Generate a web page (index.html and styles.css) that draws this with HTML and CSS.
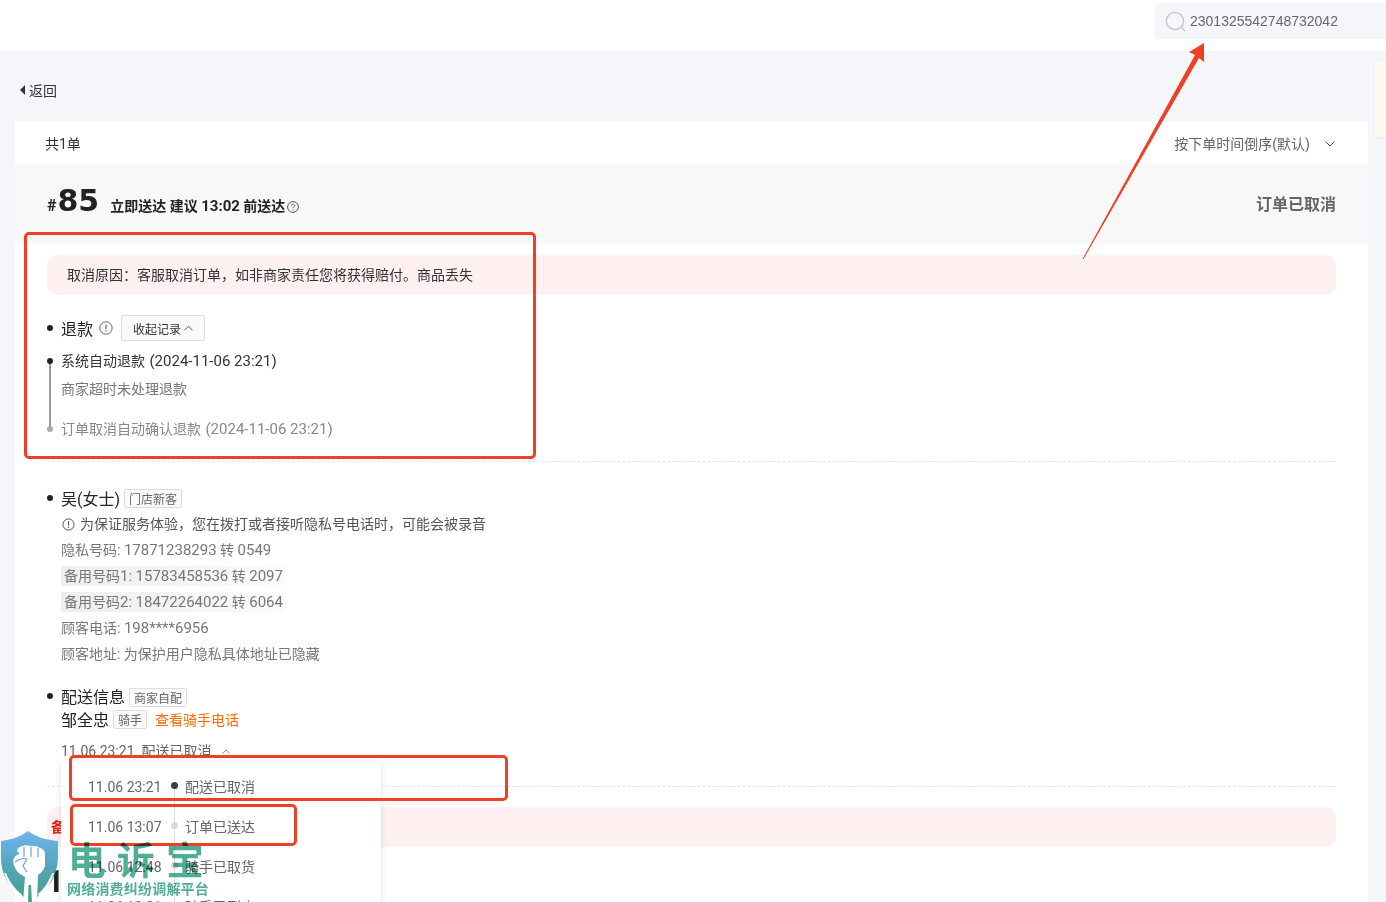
FILE: index.html
```html
<!DOCTYPE html>
<html lang="zh-CN">
<head>
<meta charset="utf-8">
<title>订单详情</title>
<link rel="stylesheet" href="styles.css">
</head>
<body>
<div class="page">
  <header class="topbar">
    <div class="search">
      <svg class="search-icon" viewBox="0 0 22 22" width="22" height="22"><circle cx="10" cy="10" r="8.6" fill="none" stroke="#c8c8d4" stroke-width="1.5"/><path d="M16.5 16.5 L20 20" stroke="#c8c8d4" stroke-width="1.5" fill="none"/></svg>
      <span class="search-text">2301325542748732042</span>
    </div>
  </header>
  <div class="content">
    <main class="main">
      <div class="back"><span class="back-arrow"></span>返回</div>
      <div class="list-head">
        <span>共1单</span>
        <span class="sort">按下单时间倒序(默认)<svg class="sort-icon" viewBox="0 0 10 6" width="10" height="6"><path d="M0.5 0.5 L5 5 L9.5 0.5" fill="none" stroke="#555" stroke-width="1"/></svg></span>
      </div>
      <div class="order-head">
        <div class="order-id">
          <span class="hash">#</span><span class="num">85</span>
          <span class="eta">立即送达 建议 <span class="wide">13:02</span> 前送达</span>
          <svg class="help" viewBox="0 0 12 12" width="12" height="12"><circle cx="6" cy="6" r="5.4" fill="none" stroke="#444" stroke-width="0.9"/><path d="M4.4 4.8 C4.4 2.8 7.6 2.8 7.6 4.7 C7.6 5.9 6 5.9 6 7.3" fill="none" stroke="#444" stroke-width="0.9"/><circle cx="6" cy="9" r="0.6" fill="#444"/></svg>
        </div>
        <div class="order-status">订单已取消</div>
      </div>
      <section class="card">
        <div class="banner">取消原因：客服取消订单，如非商家责任您将获得赔付。商品丢失</div>
        <div class="refund-block">
          <div class="title-row">
            <span class="bullet"></span><span class="title">退款</span>
            <svg class="info" viewBox="0 0 14 14" width="14" height="14"><circle cx="7" cy="7" r="6.2" fill="none" stroke="#666" stroke-width="1"/><path d="M7 3.4 V8" stroke="#666" stroke-width="1.2"/><circle cx="7" cy="10" r="0.75" fill="#666"/></svg>
            <span class="record-btn">收起记录<svg viewBox="0 0 10 6" width="9" height="6"><path d="M0.5 5.5 L5 1 L9.5 5.5" fill="none" stroke="#444" stroke-width="1"/></svg></span>
          </div>
          <div class="refund-line">
            <div class="tl tl-first"><span class="tl-dot"></span><span class="tl-main">系统自动退款 <span class="wide tl-date">(2024-11-06 23:21)</span></span></div>
            <div class="tl tl-note">商家超时未处理退款</div>
            <div class="tl tl-last"><span class="tl-dot tl-dot-grey"></span><span class="tl-grey">订单取消自动确认退款 <span class="wide tl-date">(2024-11-06 23:21)</span></span></div>
          </div>
        </div>
        <div class="dash dash-a"></div>
        <div class="customer">
          <div class="title-row">
            <span class="bullet"></span><span class="title">吴(女士)</span><span class="tag">门店新客</span>
          </div>
          <div class="info-lines">
            <div class="line line-tip"><svg viewBox="0 0 14 14" width="13" height="13"><circle cx="7" cy="7" r="6" fill="none" stroke="#445" stroke-width="1"/><path d="M7 3.6 V8" stroke="#445" stroke-width="1.2"/><circle cx="7" cy="10" r="0.75" fill="#445"/></svg>为保证服务体验，您在拨打或者接听隐私号电话时，可能会被录音</div>
            <div class="line">隐私号码: <span class="wide">17871238293</span> 转 <span class="wide">0549</span></div>
            <div class="line"><span class="backup">备用号码<span class="wide">1:</span> <span class="wide">15783458536</span> 转 <span class="wide">2097</span></span></div>
            <div class="line"><span class="backup">备用号码<span class="wide">2:</span> <span class="wide">18472264022</span> 转 <span class="wide">6064</span></span></div>
            <div class="line">顾客电话: <span class="wide">198****6956</span></div>
            <div class="line">顾客地址: 为保护用户隐私具体地址已隐藏</div>
          </div>
        </div>
        <div class="delivery">
          <div class="title-row delivery-title">
            <span class="bullet"></span><span class="title">配送信息</span><span class="tag tag-low">商家自配</span>
          </div>
          <div class="rider"><span class="title">邹全忠</span><span class="tag tag-rider">骑手</span><span class="rider-link">查看骑手电话</span></div>
          <div class="status-line">11.06 23:21&nbsp;&nbsp;配送已取消<svg viewBox="0 0 10 6" width="8" height="5"><path d="M0.5 5.5 L5 1 L9.5 5.5" fill="none" stroke="#666" stroke-width="1"/></svg></div>
        </div>
        <div class="dash dash-b"></div>
        <div class="banner banner-next"><span class="banner-red">备</span></div>
        <div class="next-num">16</div>
      </section>
    </main>
    <aside class="side-note"></aside>
  </div>

  <div class="popover">
    <div class="pop-row"><span class="pop-time">11.06 23:21</span><span class="pop-dot pop-dot-on"></span><span class="pop-label">配送已取消</span></div>
    <div class="pop-row"><span class="pop-time">11.06 13:07</span><span class="pop-dot"></span><span class="pop-label">订单已送达</span></div>
    <div class="pop-row"><span class="pop-time">11.06 12:48</span><span class="pop-dot"></span><span class="pop-label">骑手已取货</span></div>
    <div class="pop-row"><span class="pop-time">11.06 12:21</span><span class="pop-dot"></span><span class="pop-label">骑手已到店</span></div>
  </div>

  <div class="mark mark-a"></div>
  <div class="mark mark-b"></div>
  <div class="mark mark-c"></div>
  <svg class="arrow" viewBox="0 0 1386 902" width="1386" height="902"><polygon points="1082.5,259 1083.5,259 1199,58 1204,62 1204,43 1189,52 1195,55" fill="#ee4023"/></svg>

  <div class="watermark">
    <svg class="shield" viewBox="0 0 60 77" width="60" height="77">
      <defs><linearGradient id="sg" x1="0" y1="0" x2="0" y2="1"><stop offset="0" stop-color="#6fb4f0"/><stop offset="0.5" stop-color="#55a6b8"/><stop offset="1" stop-color="#3f9f86"/></linearGradient></defs>
      <path d="M28 6 C36 12 46 15 58 16 L58 33 C57 50 50 62 40 69 L33 77 L27 77 L21 69 C9 62 1 50 1 33 L1 16 C10 15 20 12 28 6 Z" fill="url(#sg)"/>
      <path d="M4 48 C8 60 14 67 22 72 L22 70 C14 63 9 56 6 48 Z M54 48 C50 60 46 66 39 71 L38 69 C45 63 49 56 52 48 Z" fill="#fff"/>
      <path d="M18 23 Q24 19 30 21 Q36 20 40 23 Q46 24 45 33 L45 41 Q43 47 38 50 L37 77 L23 77 L25 52 Q14 47 13 36 Q14 30 20 29 L17 26 Z" fill="#fff"/>
      <path d="M24 22 V32 M31 22 V32 M38 23 V32 M15 37 Q22 32 27 34 L23 41 L27 47" stroke="#5f9fc0" stroke-width="1.1" fill="none"/>
      <path d="M28.5 60 L31 60 L32 77 L28 77 Z" fill="#46a38d"/>
    </svg>
    <div class="wm-text">
      <div class="wm-big">电诉宝</div>
      <div class="wm-small">网络消费纠纷调解平台</div>
    </div>
  </div>
</div>
</body>
</html>
```
FILE: styles.css
```css
* { box-sizing: border-box; }
html, body { margin: 0; padding: 0; }
body {
  font-family: Roboto, "Noto Sans CJK SC", sans-serif;
  font-size: 14px;
  color: #666;
  background: #f5f6fa;
}
.page { position: relative; width: 1386px; height: 902px; overflow: hidden; }
.wide { font-size: 15px; }
.tl-date { margin-left: 1px; }
.topbar { height: 51px; background: #fff; display: flex; justify-content: flex-end; padding-top: 3px; }
.search { width: 231px; height: 36px; background: #f5f6fa; display: flex; align-items: center; padding-left: 10px; gap: 3px; }
.search-icon { flex: none; margin-top: 2px; }
.search-text { color: #666675; font-size: 14px; font-family: "Liberation Sans", sans-serif; }
.content { display: flex; }
.main { width: 1353px; margin-left: 15px; flex: none; }
.side-note { width: 11px; height: 76px; margin: 10px 0 0 7px; background: #fffaf0; border-radius: 2px 0 0 2px; box-shadow: 0 1px 3px rgba(0,0,0,.06); }
.back { height: 70px; display: flex; align-items: center; color: #333; font-size: 14px; padding: 7px 0 0 5px; }
.back-arrow { width: 0; height: 0; border-style: solid; border-width: 5px 5px 5px 0; border-color: transparent #333 transparent transparent; margin-right: 4px; }
.list-head { height: 42px; background: #fff; display: flex; justify-content: space-between; align-items: center; padding: 2px 33px 0 30px; color: #333; font-size: 14px; }
.sort { color: #666; display: flex; align-items: center; gap: 15px; }
.sort-icon { margin-top: 1px; }
.order-head { height: 82px; background: #f8f8f9; display: flex; justify-content: space-between; padding: 20px 32px 0; }
.order-id { display: flex; align-items: baseline; color: #222; height: 40px; }
.hash { font-size: 16px; font-weight: 700; }
.num { font-size: 30px; font-weight: 700; font-family: "DejaVu Sans", sans-serif; line-height: 36px; margin-left: 1px; }
.eta { font-size: 14px; font-weight: 700; margin-left: 11px; }
.help { margin-left: 2px; position: relative; top: 2px; }
.order-status { font-size: 16px; font-weight: 700; color: #666; padding-top: 8px; }
.card { background: #fff; height: 700px; padding: 10px 32px 0; }
.banner { height: 40px; background: #fff0f1; border-radius: 10px; display: flex; align-items: center; padding: 0 0 2px 20px; color: #333; font-size: 14px; }
.refund-block { padding-top: 20px; }
.title-row { display: flex; align-items: center; height: 26px; }
.bullet { width: 6px; height: 6px; border-radius: 50%; background: #222; margin-right: 8px; flex: none; }
.title { font-size: 16px; color: #222; }
.info { margin-left: 6px; }
.record-btn { margin-left: 8px; height: 26px; width: 84px; border: 1px solid #ddd; border-radius: 2px; display: flex; align-items: center; justify-content: center; gap: 3px; background: #fafafa; color: #333; font-size: 12px; }
.refund-line { margin-top: 10px; background: linear-gradient(#999,#999) 2px 8px / 2px 68px no-repeat; }
.tl { position: relative; padding-left: 14px; }
.tl-first { height: 28px; line-height: 20px; color: #333; }
.tl-note { height: 40px; line-height: 20px; color: #777; font-size: 14px; }
.tl-last { line-height: 20px; color: #888; }
.tl-dot { position: absolute; left: 0; top: 7px; width: 6px; height: 6px; border-radius: 50%; background: #222; }
.tl-dot-grey { background: #aaa; }
.tl-main { color: #333; }
.dash { height: 1px; border-top: 1px dashed #e4e4e4; }
.dash-a { margin-top: 22px; }
.customer { padding-top: 23px; }
.tag { margin-left: 4px; height: 19px; padding: 0 4px; border: 1px solid #ddd; border-radius: 2px; background: #fafafa; color: #666; font-size: 12px; display: inline-flex; align-items: center; }
.tag-low { margin-top: 2px; }
.info-lines { padding-left: 14px; }
.line { height: 26px; line-height: 26px; color: #777; font-size: 14px; }
.line-tip { display: flex; align-items: center; gap: 5px; color: #555; font-size: 14px; padding-left: 1px; }
.backup { display: inline-block; height: 20px; line-height: 20px; padding: 0 3px; background: linear-gradient(90deg,#eee,#fbfbfb); border-radius: 2px; }
.delivery { padding-top: 17px; }
.delivery-title { height: 24px; }
.rider { display: flex; align-items: center; height: 22px; padding-left: 14px; }
.tag-rider { margin-left: 4px; padding: 0 4px; }
.rider-link { margin-left: 8px; color: #ff6a00; font-size: 14px; }
.status-line { padding: 11px 0 0 14px; height: 42px; line-height: 20px; color: #666; display: flex; align-items: flex-start; }
.status-line svg { margin: 8px 0 0 11px; }
.dash-b { margin-top: 14px; }
.banner-next { margin-top: 20px; padding-left: 4px; }
.banner-red { color: #e2231a; font-weight: 700; font-size: 14px; }
.next-num { font-size: 32px; font-weight: 700; color: #222; line-height: 40px; padding: 14px 0 0 0; margin-left: -1px; }

.popover { position: absolute; left: 61px; top: 762px; width: 320px; height: 180px; background: #fff; box-shadow: 0 1px 6px rgba(0,0,0,.12); padding-top: 5px; }
.popover::before { content: ""; position: absolute; left: 113px; top: 25px; bottom: 0; width: 1px; background: #ddd; }
.pop-row { position: relative; height: 40px; display: flex; align-items: center; color: #666; font-size: 14px; }
.pop-time { margin-left: 27px; width: 82px; }
.pop-label { margin-top: -2px; }
.pop-dot { width: 7px; height: 7px; border-radius: 50%; background: #d8d8d8; margin: -3px 7px 0 1px; }
.pop-dot-on { background: #3b3b55; }

.mark { position: absolute; border: 3px solid #ee4023; border-radius: 5px; }
.mark-a { left: 24px; top: 232px; width: 512px; height: 227px; }
.mark-b { left: 69px; top: 755px; width: 439px; height: 46px; }
.mark-c { left: 70px; top: 804px; width: 227px; height: 42px; }
.arrow { position: absolute; left: 0; top: 0; pointer-events: none; }

.watermark { position: absolute; left: 0; top: 825px; display: flex; }
.shield { flex: none; }
.wm-text { margin-left: 8px; padding-top: 13px; mix-blend-mode: multiply; font-family: "Noto Sans CJK SC", sans-serif; color: #4fae94; white-space: nowrap; }
.wm-big { font-size: 38px; line-height: 40px; font-weight: 700; letter-spacing: 11px; }
.wm-small { font-size: 14px; line-height: 18px; font-weight: 700; letter-spacing: .2px; margin: 1px 0 0 -1px; }
```
